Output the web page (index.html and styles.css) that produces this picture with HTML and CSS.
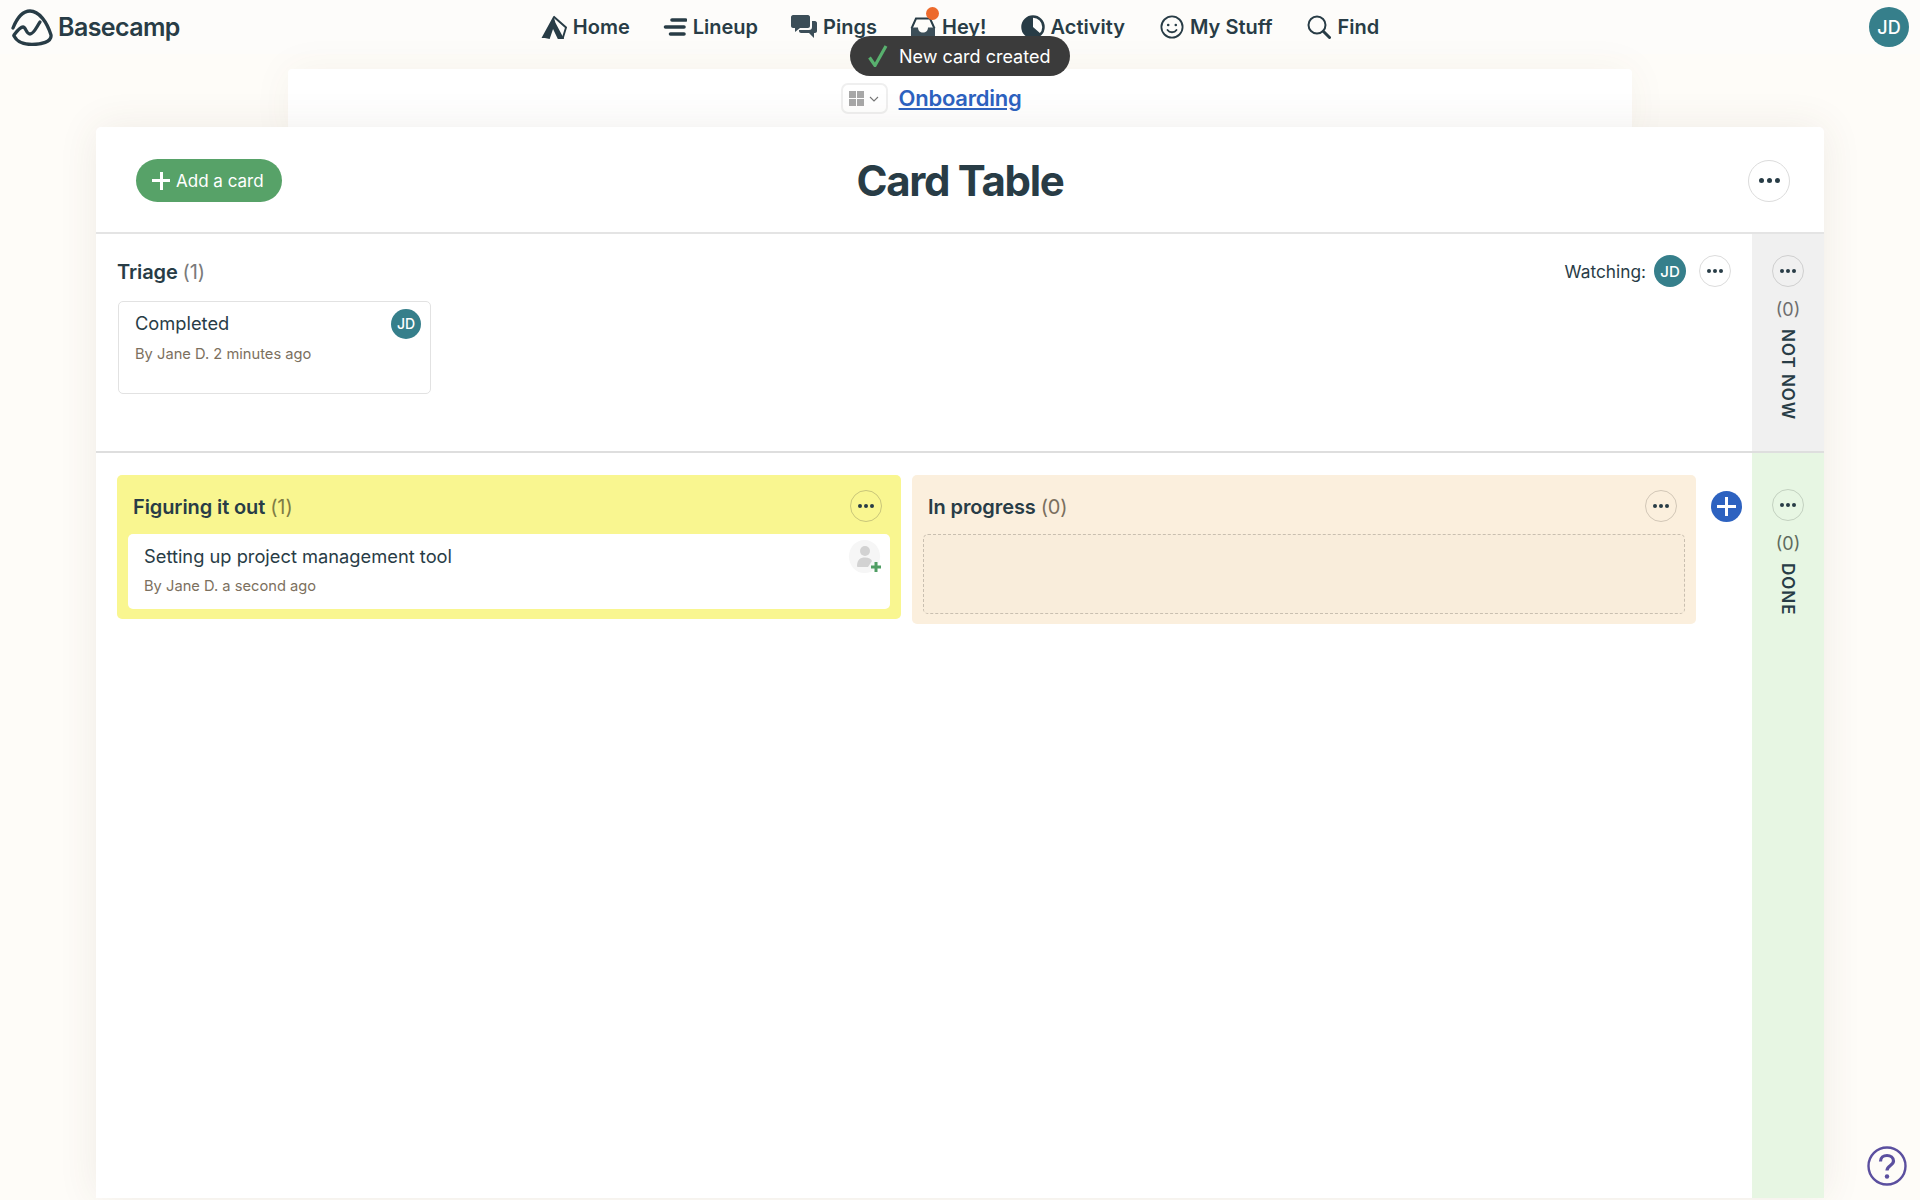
FILE: index.html
```html
<!DOCTYPE html>
<html lang="en">
<head>
<meta charset="utf-8">
<title>Card Table</title>
<link rel="stylesheet" href="styles.css">
</head>
<body>
<header class="topbar">
  <a class="brand">
    <svg class="logo" viewBox="0 0 42 37" fill="none" stroke="#283c46" stroke-width="3.300" stroke-linecap="round" stroke-linejoin="round"><path d="M2 19C6 9 12 2 19 2C28 2 36 13 40 26C41 33 30 35.500 21 35.500C13 35.500 6 33 3 27"/><path d="M3 26C6 22 9 18 12 18C15 18 15 25 19 25C23 25 26 17 29 13"/></svg>
    <span class="brand-name">Basecamp</span>
  </a>
  <nav class="nav">
    <a class="nav-item">
      <svg class="nav-icon" viewBox="0 0 27 26"><path fill="none" stroke="#283c46" stroke-width="2" d="M13 1.500 26 13 22.500 24.500"/><path fill="#283c46" d="M0.500 24 13 1 15 8 24 25H17.500L12.500 14.500 9 25 4 24Z"/></svg>
      Home
    </a>
    <a class="nav-item">
      <svg class="nav-icon nav-icon-lineup" viewBox="0 0 24 20" fill="none" stroke="#283c46" stroke-width="3.600" stroke-linecap="round"><path d="M9 3H22.500M2.500 10H21M7.500 17H21"/></svg>
      Lineup
    </a>
    <a class="nav-item">
      <svg class="nav-icon" viewBox="0 0 26 25"><path fill="#3c4e58" d="M2 0H17C18 0 19 1 19 2V11C19 12 18 13 17 13H9L4 17V13H2C1 13 0 12 0 11V2C0 1 1 0 2 0Z"/><path fill="#3c4e58" d="M21 6H24C25 6 26 7 26 8V16C26 17 25 18 24 18H23V23L18 18H10C9 18 8 17 8 16V15H18C20 15 21 14 21 12Z"/></svg>
      Pings
    </a>
    <a class="nav-item">
      <span class="hey-icon">
        <svg class="nav-icon" viewBox="0 0 26 24"><path fill="none" stroke="#283c46" stroke-width="2" d="M1.500 13 6 3H20L24.500 13"/><path fill="#3c4e58" d="M1 12H8C8 15 10 17 13 17C16 17 18 15 18 12H25V21C25 22.500 24 23.500 22.500 23.500H3.500C2 23.500 1 22.500 1 21Z"/></svg>
        <span class="hey-dot"></span>
      </span>
      Hey!
    </a>
    <a class="nav-item nav-item-activity">
      <svg class="nav-icon nav-icon-round" viewBox="0 0 24 24"><circle cx="12" cy="12" r="10.500" fill="#fdfcfa" stroke="#283c46" stroke-width="2.500"/><path fill="#283c46" d="M12 1.500V12L20 19A10.500 10.500 0 1 1 12 1.500Z"/></svg>
      Activity
    </a>
    <a class="nav-item nav-item-wide">
      <svg class="nav-icon nav-icon-round" viewBox="0 0 24 24" fill="none" stroke="#283c46"><circle cx="12" cy="12" r="10.600" stroke-width="1.800"/><circle cx="8.200" cy="10" r="1.300" fill="#283c46" stroke="none"/><circle cx="15.800" cy="10" r="1.300" fill="#283c46" stroke="none"/><path d="M7.500 15C9.500 18 14.500 18 16.500 15" stroke-width="1.800" stroke-linecap="round"/></svg>
      My Stuff
    </a>
    <a class="nav-item nav-item-wide">
      <svg class="nav-icon nav-icon-round" viewBox="0 0 24 24" fill="none" stroke="#283c46" stroke-linecap="round"><circle cx="10" cy="10" r="8.500" stroke-width="2"/><path d="M16.500 16.500 22.500 22.500" stroke-width="3"/></svg>
      Find
    </a>
  </nav>
  <div class="topbar-end"><span class="avatar avatar-lg">JD</span></div>
</header>

<div class="toast">
  <svg class="toast-check" viewBox="0 0 20 22" fill="none" stroke="#58b06e" stroke-width="3.200"><path d="M1.500 12.500 7 20.500 18 1"/></svg>
  New card created
</div>

<section class="project-sheet">
  <button class="switcher">
    <svg class="switcher-grid" viewBox="0 0 15 15" fill="#a8a8a8"><rect width="7" height="7"/><rect x="8" width="7" height="7"/><rect y="8" width="7" height="7"/><rect x="8" y="8" width="7" height="7"/></svg>
    <svg class="switcher-caret" viewBox="0 0 10 6" fill="none" stroke="#777" stroke-width="1.100"><path d="M1 1 5 5 9 1"/></svg>
  </button>
  <a class="project-link">Onboarding</a>
</section>

<main class="sheet">
  <div class="sheet-head">
    <div class="sheet-head-start">
      <button class="add-card"><span class="add-plus"></span>Add a card</button>
    </div>
    <h1 class="sheet-title">Card Table</h1>
    <div class="sheet-head-end">
      <button class="dots dots-lg"><i></i><i></i><i></i></button>
    </div>
  </div>

  <div class="row row-triage">
    <div class="triage">
      <div class="triage-head">
        <h2 class="col-title">Triage <span class="count">(1)</span></h2>
        <div class="watching">
          <span>Watching:</span>
          <span class="avatar avatar-md">JD</span>
          <button class="dots"><i></i><i></i><i></i></button>
        </div>
      </div>
      <article class="card card-outline">
        <h3 class="card-title">Completed</h3>
        <p class="card-meta">By Jane D. 2 minutes ago</p>
        <span class="avatar avatar-sm card-avatar">JD</span>
      </article>
    </div>
    <aside class="side side-grey">
      <button class="dots"><i></i><i></i><i></i></button>
      <span class="side-count">(0)</span>
      <span class="side-label">NOT NOW</span>
    </aside>
  </div>

  <div class="row row-board">
    <div class="board">
      <section class="column column-yellow">
        <div class="column-head">
          <h2 class="col-title">Figuring it out <span class="count count-olive">(1)</span></h2>
          <button class="dots dots-yellow"><i></i><i></i><i></i></button>
        </div>
        <article class="card card-plain">
          <h3 class="card-title">Setting up project management tool</h3>
          <p class="card-meta">By Jane D. a second ago</p>
          <span class="assign">
            <svg class="assign-icon" viewBox="0 0 26 28"><circle cx="9" cy="6" r="5" fill="#d2d2d2"/><path fill="#d2d2d2" d="M1 21C1 15 4 12.500 9 12.500C13 12.500 15 14 16 16L12 22H2C1.400 22 1 21.500 1 21Z"/><path stroke="#4f9d63" stroke-width="3" d="M20 17V27M15 22H25"/></svg>
          </span>
        </article>
      </section>
      <section class="column column-tan">
        <div class="column-head">
          <h2 class="col-title">In progress <span class="count count-brown">(0)</span></h2>
          <button class="dots dots-tan"><i></i><i></i><i></i></button>
        </div>
        <div class="dropzone"></div>
      </section>
      <button class="add-column"><span class="add-plus add-plus-lg"></span></button>
    </div>
    <aside class="side side-green">
      <button class="dots dots-green"><i></i><i></i><i></i></button>
      <span class="side-count">(0)</span>
      <span class="side-label">DONE</span>
    </aside>
  </div>
</main>

<button class="help">
  <svg class="help-icon" viewBox="0 0 40 40" fill="none" stroke="#5b4f9f"><circle cx="20" cy="20" r="18.500" stroke-width="2.400"/><path d="M13.500 15.500C13.500 11.500 16.500 9.500 20 9.500C23.500 9.500 26.500 11.500 26.500 15C26.500 19.500 20 19.500 20 24.500" stroke-width="3.200"/><circle cx="20" cy="30.500" r="2.200" fill="#5b4f9f" stroke="none"/></svg>
</button>
</body>
</html>
```
FILE: styles.css
```css
* { box-sizing: border-box; }
html, body { height: 100%; }
body {
  margin: 0;
  height: 1200px;
  overflow: hidden;
  position: relative;
  background: #fefcf8;
  color: #283c46;
  font-family: Inter, "Liberation Sans", sans-serif;
}
h1, h2, h3, p { margin: 0; }
button { font-family: inherit; padding: 0; cursor: pointer; }

.topbar {
  height: 54px;
  padding: 0 11px 0 11px;
  display: grid;
  grid-template-columns: 1fr auto 1fr;
  align-items: center;
  background: #fdfcfa;
}
.brand { display: flex; align-items: center; gap: 5px; height: 44px; }
.logo { width: 42px; height: 37px; flex: none; }
.brand-name { font-size: 25px; font-weight: 600; letter-spacing: -0.6px; }
.nav { display: flex; align-items: center; gap: 33px; }
.nav-item {
  display: flex;
  align-items: center;
  gap: 6px;
  font-size: 20px;
  font-weight: 600;
}
.nav-item-activity { margin-left: 1px; }
.nav-item-wide { margin-left: 2px; }
.nav-icon { width: 26px; height: 25px; flex: none; }
.nav-icon-lineup { width: 24px; height: 20px; }
.nav-icon-round { width: 24px; height: 24px; }
.hey-icon { position: relative; display: block; width: 26px; height: 25px; }
.hey-dot {
  position: absolute;
  top: -8px;
  right: -3px;
  width: 13px;
  height: 13px;
  border-radius: 50%;
  background: #ed6a2c;
}
.topbar-end { display: flex; justify-content: flex-end; }

.avatar {
  display: flex;
  align-items: center;
  justify-content: center;
  flex: none;
  border-radius: 50%;
  background: #367f8b;
  color: #fff;
  font-weight: 500;
}
.avatar-lg { width: 40px; height: 40px; font-size: 18px; }
.avatar-md { width: 32px; height: 32px; font-size: 15px; }
.avatar-sm { width: 30px; height: 30px; font-size: 14px; }

.toast {
  position: absolute;
  top: 36px;
  left: 850px;
  z-index: 5;
  width: 220px;
  height: 40px;
  padding-left: 18px;
  display: flex;
  align-items: center;
  gap: 11px;
  border-radius: 20px;
  background: #3b3b3b;
  color: #fff;
  font-size: 18px;
}
.toast-check { width: 20px; height: 22px; flex: none; }

.project-sheet {
  width: 1344px;
  height: 73px;
  margin: 15px auto -15px;
  padding-top: 14px;
  display: grid;
  grid-template-columns: 1fr auto 1fr;
  align-items: start;
  column-gap: 11px;
  background: #fff;
  border-radius: 4px 4px 0 0;
  box-shadow: 0 0 40px rgba(90, 70, 40, 0.05);
}
.switcher {
  width: 47px;
  height: 31px;
  justify-self: end;
  display: flex;
  align-items: center;
  justify-content: center;
  gap: 5px;
  background: #fff;
  border: 2px solid #efefef;
  border-radius: 7px;
}
.switcher-grid { width: 15px; height: 15px; }
.switcher-caret { width: 10px; height: 6px; }
.project-link {
  font-size: 22px;
  font-weight: 600;
  line-height: 30px;
  color: #2d62c0;
  text-decoration: underline;
  letter-spacing: -0.25px;
}

.sheet {
  position: relative;
  width: 1728px;
  height: 1071px;
  margin-left: 96px;
  display: flex;
  flex-direction: column;
  background: #fff;
  border-radius: 5px 5px 0 0;
  box-shadow: 0 0 40px rgba(90, 70, 40, 0.09);
}
.sheet-head {
  height: 107px;
  flex: none;
  padding: 2px 34px 0;
  display: grid;
  grid-template-columns: 1fr auto 1fr;
  align-items: center;
  border-bottom: 2px solid #e4e4e4;
}
.sheet-head-start { padding-left: 6px; }
.sheet-head-end { display: flex; justify-content: flex-end; }
.add-card {
  width: 146px;
  height: 43px;
  padding-left: 16px;
  display: flex;
  align-items: center;
  gap: 6px;
  border: 0;
  border-radius: 22px;
  background: #57a268;
  color: #fff;
  font-size: 17px;
}
.add-plus {
  display: block;
  width: 18px;
  height: 18px;
  background:
    linear-gradient(#fff, #fff) center / 100% 3px no-repeat,
    linear-gradient(#fff, #fff) center / 3px 100% no-repeat;
}
.add-plus-lg { width: 19px; height: 19px; }
.sheet-title {
  font-size: 42px;
  font-weight: 700;
  letter-spacing: -1.3px;
  margin-top: -1px;
}

.dots {
  width: 32px;
  height: 32px;
  flex: none;
  display: flex;
  align-items: center;
  justify-content: center;
  gap: 2px;
  background: #fff;
  border: 1.500px solid #dcdcdc;
  border-radius: 50%;
}
.dots i { display: block; width: 4px; height: 4px; border-radius: 50%; background: #283c46; }
.dots-lg { width: 42px; height: 42px; gap: 3px; }
.dots-lg i { width: 5px; height: 5px; }
.dots-yellow { background: transparent; border-color: #c9c67a; }
.dots-tan { background: transparent; border-color: #d2c7b7; }
.dots-green { background: transparent; border-color: #c3d1c0; }
.side-grey .dots { background: transparent; border-color: #cfcfcf; }

.row { display: flex; flex: none; }
.row-triage { height: 219px; border-bottom: 2px solid #dedede; }
.row-board { flex: 1; }
.triage { flex: 1; padding: 21px 21px 0; }
.triage-head { display: flex; justify-content: space-between; align-items: flex-start; }
.col-title { font-size: 20px; font-weight: 600; line-height: 32px; letter-spacing: -0.1px; }
.triage-head .col-title { margin-top: 1px; }
.column-head .col-title { padding-top: 2px; }
.count { font-weight: 400; color: #7a7a7a; }
.count-olive { color: #7f7c45; }
.count-brown { color: #7a6f5f; }
.watching { display: flex; align-items: center; gap: 8px; font-size: 17.300px; }
.watching .dots { margin-left: 5px; }

.card { position: relative; background: #fff; border-radius: 5px; }
.card-outline {
  width: 313px;
  height: 93px;
  margin: 13px 0 0 1px;
  padding: 9px 16px;
  border: 1.500px solid #e2e2e2;
}
.card-plain { height: 75px; padding: 10px 16px; }
.card-plain .card-meta { margin-top: 7px; }
.card-title { font-size: 18.300px; font-weight: 400; line-height: 25px; }
.card-meta { margin-top: 8px; font-size: 14.700px; line-height: 20px; color: #7c705e; }
.card-avatar { position: absolute; top: 6.500px; right: 9px; }
.assign {
  position: absolute;
  top: 6px;
  right: 10px;
  width: 31px;
  height: 33px;
  padding: 5px 0 0 7px;
  border-radius: 50%;
  background: #f6f6f6;
}
.assign-icon { display: block; width: 26px; height: 28px; }

.board {
  flex: 1;
  padding: 22px 10px 0 21px;
  display: flex;
  align-items: flex-start;
  gap: 11px;
}
.column { width: 784px; border-radius: 5px; padding: 15px 11px 10px; }
.column-yellow { background: #f9f690; height: 144px; }
.column-tan { background: #fbefdd; height: 149px; }
.column-head {
  display: flex;
  justify-content: space-between;
  align-items: center;
  height: 32px;
  margin-bottom: 12px;
  padding-left: 5px;
  padding-right: 8px;
}
.dropzone {
  height: 80px;
  background: #f9eddb;
  border: 1.500px dashed #c9bfb0;
  border-radius: 5px;
}
.add-column {
  width: 31px;
  height: 31px;
  margin: 16px 0 0 4px;
  display: flex;
  align-items: center;
  justify-content: center;
  border: 0;
  border-radius: 50%;
  background: #2d62c0;
}

.side {
  width: 72px;
  flex: none;
  padding-top: 21px;
  display: flex;
  flex-direction: column;
  align-items: center;
}
.side-grey { background: #f0f0f0; }
.side-green { background: #e7f6e3; padding-top: 36px; }
.side-count { margin-top: 10px; font-size: 18px; line-height: 26px; color: #6e6e6e; }
.side-green .side-count { color: #5f6b5d; }
.side-label {
  margin-top: 6px;
  writing-mode: vertical-rl;
  font-size: 17px;
  font-weight: 600;
  letter-spacing: 1px;
  line-height: 20px;
}

.help {
  position: absolute;
  right: 13px;
  bottom: 14px;
  width: 40px;
  height: 40px;
  background: none;
  border: 0;
}
.help-icon { display: block; width: 40px; height: 40px; }
```
